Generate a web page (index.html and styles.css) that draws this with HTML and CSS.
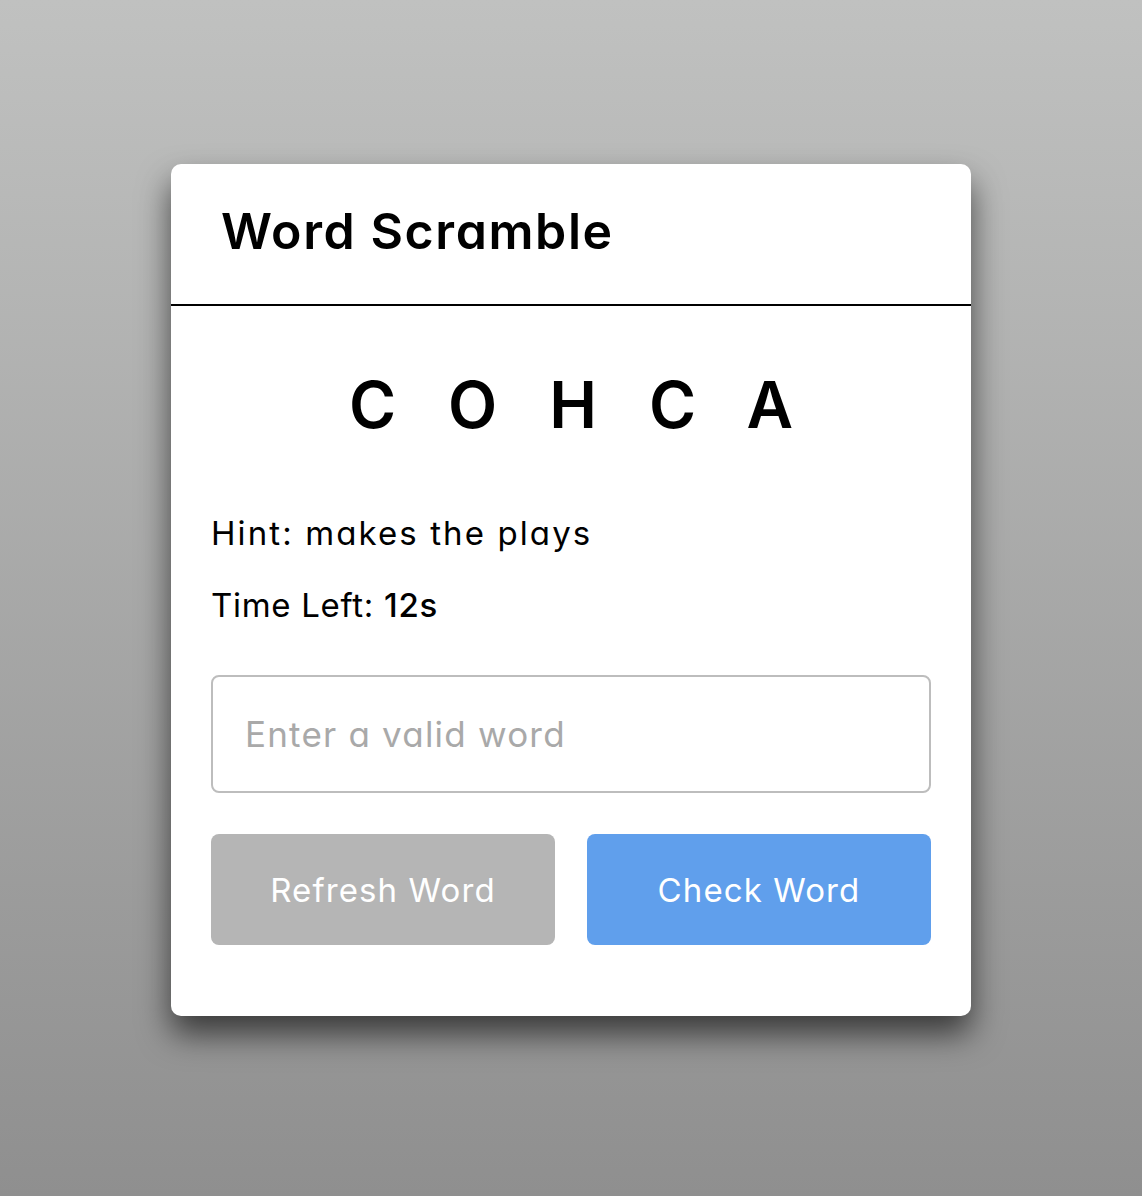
FILE: index.html
```html
<!DOCTYPE html>
<html lang="en">
<head>
<meta charset="utf-8">
<title>Word Scramble</title>
<link rel="stylesheet" href="styles.css">
</head>
<body>
<div class="card">
  <header class="card-header">
    <h1 class="title">Word Scramble</h1>
  </header>
  <div class="content">
    <p class="word">COHCA</p>
    <div class="details">
      <p class="hint">Hint: <span>makes the plays</span></p>
      <p class="time">Time Left: <b>12s</b></p>
    </div>
    <input class="answer" type="text" placeholder="Enter a valid word">
    <div class="buttons">
      <button class="btn refresh">Refresh Word</button>
      <button class="btn check">Check Word</button>
    </div>
  </div>
</div>
</body>
</html>
```

FILE: styles.css
```css
* {
  box-sizing: border-box;
  margin: 0;
  padding: 0;
}

html, body {
  height: 100%;
}

body {
  min-height: 1196px;
  background: linear-gradient(180deg, #c0c1c0 0%, #8f8f8f 100%);
  font-family: "Inter", "Liberation Sans", sans-serif;
  font-feature-settings: "cv11" 1;
  display: flex;
  justify-content: center;
  align-items: flex-start;
  padding-top: 164px;
}

.card {
  width: 800px;
  background: #fff;
  border-radius: 10px;
  box-shadow: 0 18px 32px rgba(0, 0, 0, 0.62);
}

.card-header {
  height: 142px;
  border-bottom: 2px solid #000;
  display: flex;
  align-items: center;
  padding: 0 0 6px 50px;
}

.title {
  font-size: 50px;
  font-weight: 600;
  letter-spacing: 1.6px;
  color: #000;
  line-height: 60px;
}

.content {
  padding: 59px 40px 71px;
}

.word {
  text-align: center;
  font-size: 64px;
  font-weight: 600;
  line-height: 80px;
  letter-spacing: 52px;
  margin-right: -52px;
  color: #000;
}

.details {
  margin-top: 68px;
}

.hint, .time {
  font-size: 33px;
  line-height: 40px;
  color: #000;
}

.hint {
  letter-spacing: 2.1px;
}

.time {
  margin-top: 32px;
  letter-spacing: 0.7px;
}

.time b {
  font-weight: 500;
}

.answer {
  display: block;
  width: 100%;
  height: 118px;
  margin-top: 50px;
  border: 2px solid #bdbdbd;
  border-radius: 8px;
  padding: 0 32px;
  font-family: inherit;
  font-feature-settings: "cv11" 1;
  font-size: 35px;
  letter-spacing: 1.2px;
  color: #000;
  outline: none;
}

.answer::placeholder {
  color: #a9a9a9;
}

.buttons {
  display: flex;
  gap: 32px;
  margin-top: 41px;
}

.btn {
  flex: 1;
  height: 111px;
  border: none;
  border-radius: 8px;
  color: #fff;
  font-family: inherit;
  font-feature-settings: "cv11" 1;
  font-size: 33px;
  font-weight: 400;
  letter-spacing: 1.1px;
}

.refresh {
  background: #b5b5b5;
}

.check {
  background: #609fec;
}
```
